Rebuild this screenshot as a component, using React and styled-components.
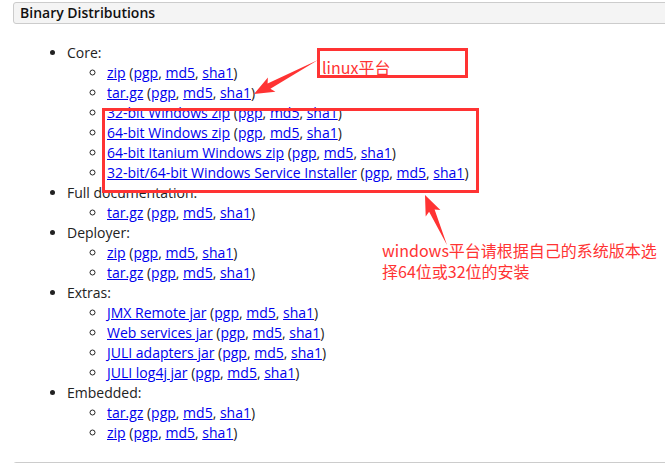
import React from 'react';
import styled, { createGlobalStyle } from 'styled-components';

const sums = ['pgp', 'md5', 'sha1'];

const sections = [
  {
    title: 'Core:',
    items: [
      'zip',
      'tar.gz',
      '32-bit Windows zip',
      '64-bit Windows zip',
      '64-bit Itanium Windows zip',
      '32-bit/64-bit Windows Service Installer',
    ],
  },
  { title: 'Full documentation:', items: ['tar.gz'] },
  { title: 'Deployer:', items: ['zip', 'tar.gz'] },
  {
    title: 'Extras:',
    items: ['JMX Remote jar', 'Web services jar', 'JULI adapters jar', 'JULI log4j jar'],
  },
  { title: 'Embedded:', items: ['tar.gz', 'zip'] },
];

// tail thin, widening shaft, triangular head
function arrowPoints(x1, y1, x2, y2) {
  const dx = x2 - x1;
  const dy = y2 - y1;
  const len = Math.hypot(dx, dy);
  const ux = dx / len;
  const uy = dy / len;
  const nx = -uy;
  const ny = ux;
  const head = 17;
  const shaft = 3;
  const barb = 8;
  const bx = x2 - ux * head;
  const by = y2 - uy * head;
  const pts = [
    [x1, y1],
    [bx + nx * shaft, by + ny * shaft],
    [bx - ux * 3 + nx * barb, by - uy * 3 + ny * barb],
    [x2, y2],
    [bx - ux * 3 - nx * barb, by - uy * 3 - ny * barb],
    [bx - nx * shaft, by - ny * shaft],
  ];
  return pts.map((p) => p.map((v) => v.toFixed(1)).join(',')).join(' ');
}

export default function App() {
  return (
    <Page>
      <GlobalStyle />
      <SectionHeader>Binary Distributions</SectionHeader>
      <TopList>
        {sections.map((s) => (
          <li key={s.title}>
            {s.title}
            <SubList>
              {s.items.map((it) => (
                <li key={it}>
                  <Link href="#">{it}</Link> (
                  {sums.map((x, i) => (
                    <React.Fragment key={x}>
                      <Link href="#">{x}</Link>
                      {i < sums.length - 1 ? ', ' : ''}
                    </React.Fragment>
                  ))}
                  )
                </li>
              ))}
            </SubList>
          </li>
        ))}
      </TopList>
      <SectionHeader />

      <Arrows width="665" height="463">
        <polygon points={arrowPoints(318, 60, 254, 94)} />
        <polygon points={arrowPoints(447, 245, 425, 195)} />
      </Arrows>
      <NoteBox $left={317} $top={48} $width={151} $height={30}>
        <NoteText>linux平台</NoteText>
      </NoteBox>
      <NoteBox $left={102} $top={108} $width={377} $height={85} />
      <FreeNote>
        windows平台请根据自己的系统版本选
        <br />
        择64位或32位的安装
      </FreeNote>
    </Page>
  );
}

const GlobalStyle = createGlobalStyle`
  html, body {
    margin: 0;
    padding: 0;
    background: #fff;
    overflow: hidden;
  }
`;

const Page = styled.div`
  position: relative;
  width: 665px;
  height: 463px;
  overflow: hidden;
  padding: 2px 0 0 13px;
  box-sizing: border-box;
  font-family: "Open Sans", "Liberation Sans", sans-serif;
  font-size: 14px;
  color: #222;
`;

const SectionHeader = styled.div`
  width: 700px;
  height: 20px;
  box-sizing: content-box;
  border: 1px solid #ccc;
  border-radius: 3px;
  background: #f4f4f4;
  padding: 0 6px;
  font-weight: 600;
  font-size: 14px;
  line-height: 20px;
  color: #111;
`;

const TopList = styled.ul`
  list-style: disc;
  margin: 19px 0 19px;
  padding-left: 54px;
  line-height: 20px;
`;

const SubList = styled.ul`
  list-style: circle;
  margin: 0;
  padding-left: 40px;
`;

const Link = styled.a`
  color: #0000ee;
  text-decoration: underline;
`;

const Arrows = styled.svg`
  position: absolute;
  left: 0;
  top: 0;
  fill: #f33;
  pointer-events: none;
`;

const NoteBox = styled.div`
  position: absolute;
  left: ${(p) => p.$left}px;
  top: ${(p) => p.$top}px;
  width: ${(p) => p.$width}px;
  height: ${(p) => p.$height}px;
  box-sizing: border-box;
  border: 3px solid #f33;
`;

const NoteText = styled.div`
  padding: 6px 0 0 2px;
  font-family: "Noto Sans CJK SC", "Noto Sans", sans-serif;
  font-size: 16px;
  line-height: 20px;
  color: #f33;
`;

const FreeNote = styled.div`
  position: absolute;
  left: 382px;
  top: 240px;
  font-family: "Noto Sans CJK SC", "Noto Sans", sans-serif;
  font-size: 16px;
  line-height: 21px;
  color: #f33;
  white-space: nowrap;
`;
